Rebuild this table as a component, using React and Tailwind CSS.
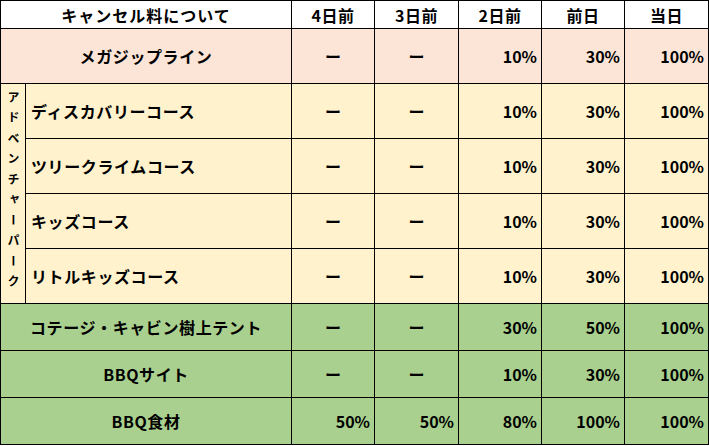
const FONT = "font-['Noto_Sans_CJK_JP','Noto_Sans',sans-serif]";

const standard = ["ー", "ー", "10%", "30%", "100%"];

const adventureCourses = [
  "ディスカバリーコース",
  "ツリークライムコース",
  "キッズコース",
  "リトルキッズコース",
];

const greenRows = [
  { name: "コテージ・キャビン樹上テント", values: ["ー", "ー", "30%", "50%", "100%"] },
  { name: "BBQサイト", values: standard },
  { name: "BBQ食材", values: ["50%", "50%", "80%", "100%", "100%"] },
];

const headers = ["4日前", "3日前", "2日前", "前日", "当日"];

function ValueCell({ value }) {
  const isDash = value === "ー";
  return (
    <td
      className={`border border-black px-1 align-middle ${
        isDash ? "text-center" : "text-right"
      }`}
    >
      {value}
    </td>
  );
}

export default function App() {
  return (
    <div className={`w-[709px] h-[446px] bg-white ${FONT}`}>
      <table className="table-fixed border-collapse w-[708px] text-[16px] font-bold text-black leading-none">
        <colgroup>
          <col className="w-[25px]" />
          <col className="w-[266px]" />
          <col className="w-[83px]" />
          <col className="w-[84px]" />
          <col className="w-[83px]" />
          <col className="w-[83px]" />
          <col className="w-[84px]" />
        </colgroup>
        <tbody>
          {/* header */}
          <tr className="h-[28px] bg-white">
            <td colSpan={2} className="border border-black text-center align-middle tracking-[1px]">
              キャンセル料について
            </td>
            {headers.map((h) => (
              <td key={h} className="border border-black text-center align-middle tracking-[0.5px]">
                {h}
              </td>
            ))}
          </tr>

          {/* megazip */}
          <tr className="h-[55px] bg-[#fce4d6]">
            <td colSpan={2} className="border border-black text-center align-middle tracking-[0.6px]">
              メガジップライン
            </td>
            {standard.map((v, i) => (
              <ValueCell key={i} value={v} />
            ))}
          </tr>

          {/* adventure park */}
          {adventureCourses.map((course, idx) => (
            <tr key={course} className="h-[55px] bg-[#fff2cc]">
              {idx === 0 && (
                <td rowSpan={4} className="border border-black align-middle p-0">
                  <div className="flex justify-center">
                    <div className="[writing-mode:vertical-rl] [text-orientation:upright] text-[12px] tracking-[8.5px] leading-none">
                      アドベンチャーパーク
                    </div>
                  </div>
                </td>
              )}
              <td className="border border-black pl-[5px] align-middle tracking-[0.6px]">{course}</td>
              {standard.map((v, i) => (
                <ValueCell key={i} value={v} />
              ))}
            </tr>
          ))}

          {/* green rows */}
          {greenRows.map((row) => (
            <tr key={row.name} className="h-[47px] bg-[#a9d08e]">
              <td colSpan={2} className="border border-black text-center align-middle tracking-[0.6px]">
                {row.name}
              </td>
              {row.values.map((v, i) => (
                <ValueCell key={i} value={v} />
              ))}
            </tr>
          ))}
        </tbody>
      </table>
    </div>
  );
}
